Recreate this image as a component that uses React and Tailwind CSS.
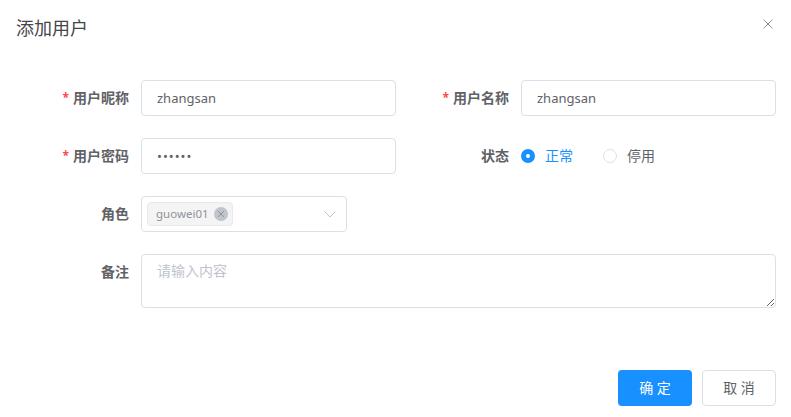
import React from 'react';

const FONT = "font-['Noto_Sans','Noto_Sans_CJK_SC',sans-serif]";

function Label({ required, wide = true, children }) {
  return (
    <label className={`${wide ? 'w-[129px]' : 'w-[125px]'} shrink-0 pr-3 h-9 text-sm font-bold text-[#606266] flex justify-end items-center`}>
      {required && <span className="text-[#ff4949] mr-1 text-xs">*</span>}
      {children}
    </label>
  );
}

function TextInput({ value, dots }) {
  return (
    <div className={`w-[255px] shrink-0 h-9 rounded border border-[#dcdfe6] bg-white px-[15px] text-[13px] leading-[34px] text-[#606266] ${dots ? 'tracking-[1px]' : ''}`}>
      {value}
    </div>
  );
}

function Radio({ checked, children }) {
  return (
    <div className={`flex items-center gap-[10px] text-sm ${checked ? 'text-[#1890ff]' : 'text-[#606266]'}`}>
      {checked ? (
        <span className="w-3.5 h-3.5 rounded-full bg-[#1890ff] flex items-center justify-center">
          <span className="w-1 h-1 rounded-full bg-white" />
        </span>
      ) : (
        <span className="w-3.5 h-3.5 rounded-full border border-[#dcdfe6] bg-white" />
      )}
      <span>{children}</span>
    </div>
  );
}

export default function App() {
  return (
    <div className={`${FONT} w-[791px] h-[417px] bg-white flex flex-col overflow-hidden relative`}>
      <header className="pt-4 pl-4 h-[80px]">
        <h2 className="text-lg leading-6 text-[#44464a] font-normal">添加用户</h2>
      </header>
      <button className="absolute top-[19px] right-[18px] text-[#909399]">
        <svg width="10" height="10" viewBox="0 0 10 10" fill="none" stroke="currentColor" strokeWidth="1" className="block">
          <path d="M.5.5l9 9M9.5.5l-9 9" />
        </svg>
      </button>

      <form className="flex flex-col gap-[22px] pl-3">
        <div className="flex">
          <div className="flex w-[384px]">
            <Label required>用户昵称</Label>
            <TextInput value="zhangsan" />
          </div>
          <div className="flex">
            <Label required wide={false}>用户名称</Label>
            <TextInput value="zhangsan" />
          </div>
        </div>

        <div className="flex">
          <div className="flex w-[384px]">
            <Label required>用户密码</Label>
            <TextInput value="••••••" dots />
          </div>
          <div className="flex">
            <Label wide={false}>状态</Label>
            <div className="flex items-center gap-[30px] h-9">
              <Radio checked>正常</Radio>
              <Radio>停用</Radio>
            </div>
          </div>
        </div>

        <div className="flex">
          <Label>角色</Label>
          <div className="w-[206px] h-9 rounded border border-[#dcdfe6] bg-white flex items-center justify-between pl-[5px] pr-[10px]">
            <span className="h-6 w-[86px] rounded border border-[#e9e9eb] bg-[#f4f4f5] pl-2 pr-1 flex items-center justify-between text-[11.5px] text-[#909399]">
              guowei01
              <span className="w-3.5 h-3.5 rounded-full bg-[#c0c4cc] flex items-center justify-center text-[#909399]">
                <svg width="8" height="8" viewBox="0 0 8 8" fill="none" stroke="currentColor" strokeWidth="1">
                  <path d="M1 1l6 6M7 1L1 7" />
                </svg>
              </span>
            </span>
            <svg width="12" height="7" viewBox="0 0 12 7" fill="none" stroke="#c0c4cc" strokeWidth="1">
              <path d="M.5.5L6 6l5.5-5.5" />
            </svg>
          </div>
        </div>

        <div className="flex">
          <Label>备注</Label>
          <textarea
            readOnly
            placeholder="请输入内容"
            className="w-[635px] h-[54px] rounded border border-[#dcdfe6] bg-white px-[15px] py-[5px] text-sm leading-[21px] text-[#606266] placeholder:text-[#c0c4cc] outline-none"
          />
        </div>
      </form>

      <footer className="mt-auto pb-[11px] pr-[15px] flex justify-end gap-2.5">
        <button className="w-[74px] h-9 rounded bg-[#1890ff] text-white text-sm">确 定</button>
        <button className="w-[74px] h-9 rounded border border-[#dcdfe6] bg-white text-[#606266] text-sm">取 消</button>
      </footer>
    </div>
  );
}
